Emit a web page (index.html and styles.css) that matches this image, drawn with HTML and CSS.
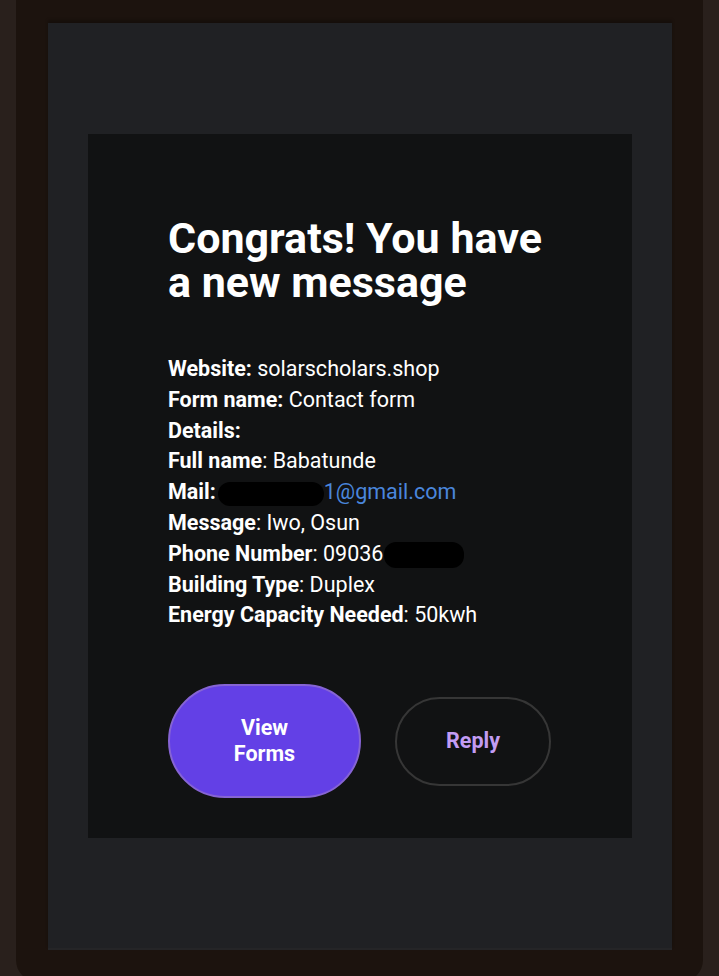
FILE: index.html
```html
<!DOCTYPE html>
<html lang="en">
<head>
  <meta charset="UTF-8">
  <meta name="viewport" content="width=device-width, initial-scale=1.0">
  <title>New message</title>
  <link rel="stylesheet" href="styles.css">
</head>
<body>
<div class="frame">
  <div class="panel">
    <div class="card">
      <h1>Congrats! You have a new message</h1>
      <div class="details">
        <div><b>Website:</b> solarscholars.shop</div>
        <div><b>Form name:</b> Contact form</div>
        <div><b>Details:</b></div>
        <div><b>Full name</b>: Babatunde</div>
        <div><b>Mail:</b><span class="redact redact-mail"></span><a href="#" class="mail-link">1@gmail.com</a></div>
        <div><b>Message</b>: Iwo, Osun</div>
        <div><b>Phone Number</b>: 09036<span class="redact redact-phone"></span></div>
        <div><b>Building Type</b>: Duplex</div>
        <div><b>Energy Capacity Needed</b>: 50kwh</div>
      </div>
      <div class="actions">
        <a href="#" class="btn btn-primary">View<br>Forms</a>
        <a href="#" class="btn btn-outline">Reply</a>
      </div>
    </div>
  </div>
</div>
</body>
</html>
```

FILE: styles.css
```css
body {
  font-family: Roboto, "Noto Sans", Arial, sans-serif;
  background-color: #29201c;
  margin: 0;
  padding: 0;
  height: 976px;
  overflow: hidden;
}

.frame {
  background-color: #1c130e;
  margin: 0 16px;
  height: 982px;
  padding: 23px 31px 0 32px;
  border-radius: 0 0 22px 22px;
  box-sizing: border-box;
}

.panel {
  background-color: #202124;
  height: 927px;
  padding: 111px 40px 0;
  box-sizing: border-box;
  box-shadow: 0 -3px 3px rgba(0, 0, 0, 0.25);
  border-bottom: 2px solid #252527;
}

.card {
  background-color: #111213;
  height: 704px;
  padding: 82px 80px 0;
  box-sizing: border-box;
  color: #ffffff;
}

h1 {
  margin: 0;
  font-size: 43px;
  line-height: 44px;
  font-weight: 700;
}

.details {
  margin-top: 50px;
  font-size: 21.5px;
  line-height: 30.8px;
}

.details b {
  font-weight: 700;
}

.mail-link {
  color: #4a86dc;
  text-decoration: none;
}

.redact {
  display: inline-block;
  background-color: #000000;
  border-radius: 12px;
  vertical-align: middle;
}

.redact-mail {
  width: 106px;
  height: 24px;
  margin-left: 2px;
}

.redact-phone {
  width: 80px;
  height: 26px;
  margin-left: 1px;
}

.actions {
  display: flex;
  align-items: center;
  gap: 34px;
  margin-top: 53px;
}

.btn {
  display: flex;
  align-items: center;
  justify-content: center;
  text-align: center;
  text-decoration: none;
  font-size: 21.5px;
  line-height: 26px;
  font-weight: 700;
  border-radius: 60px;
  box-sizing: border-box;
}

.btn-primary {
  width: 193px;
  height: 114px;
  background-color: #6340e6;
  border: 2px solid #8664d4;
  color: #ffffff;
}

.btn-outline {
  width: 156px;
  height: 89px;
  border: 2px solid #363636;
  color: #c39cf3;
}
```
